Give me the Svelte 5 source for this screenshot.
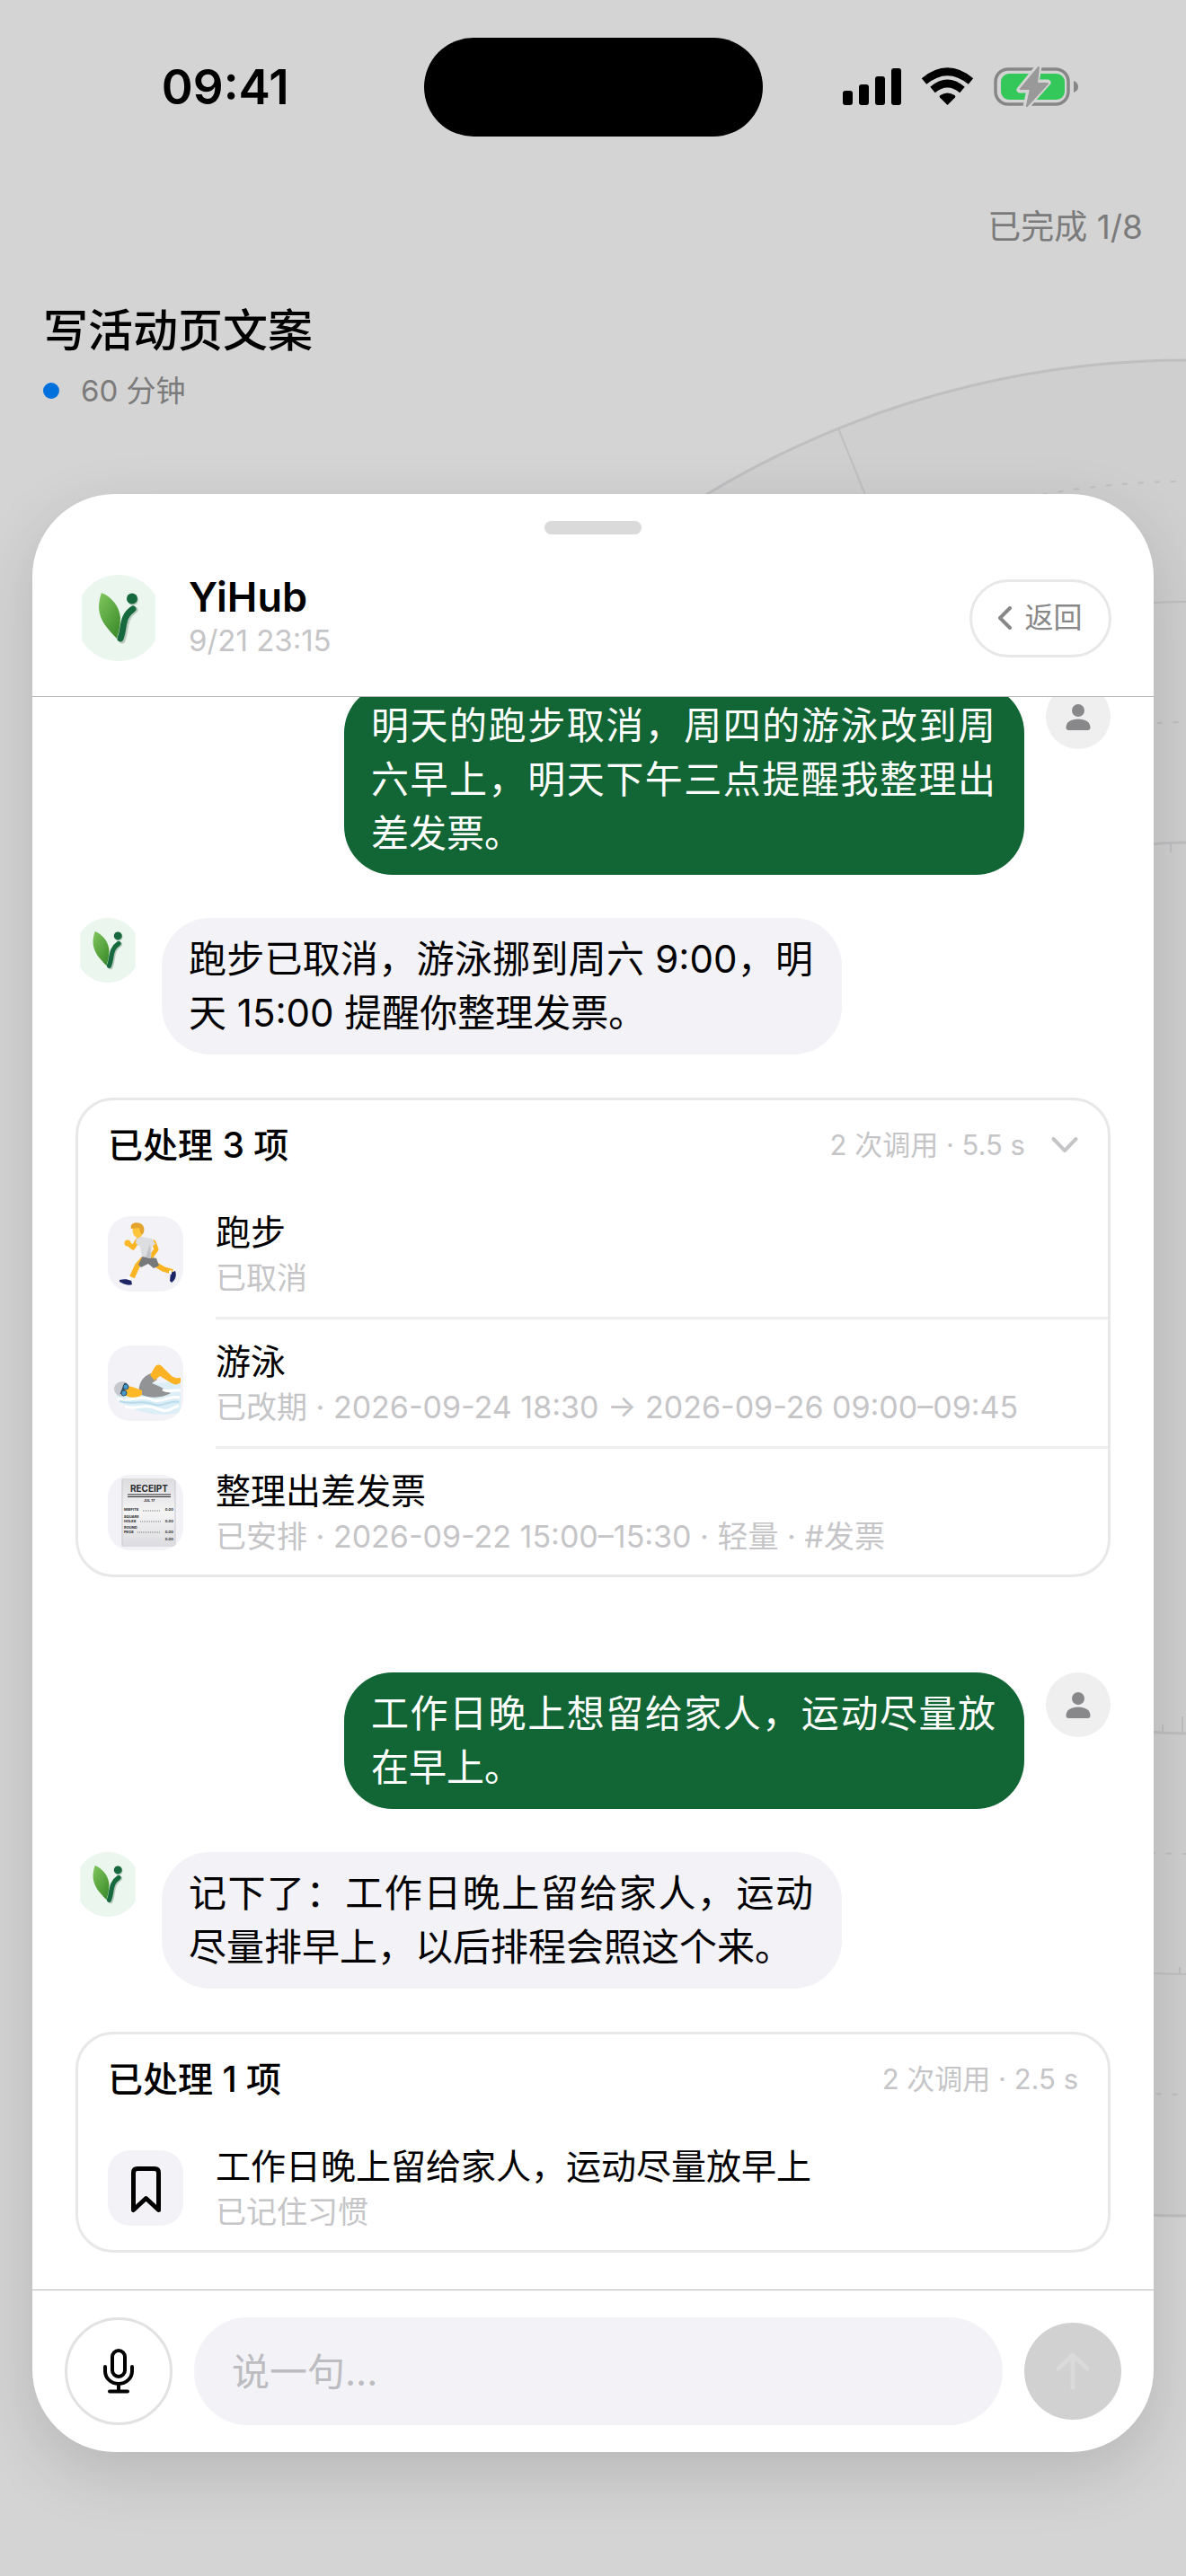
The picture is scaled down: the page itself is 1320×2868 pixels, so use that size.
<script>
  const threads = [
    {
      ask: '明天的跑步取消，周四的游泳改到周六早上，明天下午三点提醒我整理出差发票。',
      reply: '跑步已取消，游泳挪到周六 9:00，明天 15:00 提醒你整理发票。',
      title: '已处理 3 项',
      meta: '2 次调用 · 5.5 s',
      foldable: true,
      items: [
        { icon: 'run', name: '跑步', note: '已取消' },
        { icon: 'swim', name: '游泳', note: '已改期 · 2026-09-24 18:30 → 2026-09-26 09:00–09:45' },
        { icon: 'receipt', name: '整理出差发票', note: '已安排 · 2026-09-22 15:00–15:30 · 轻量 · #发票' }
      ]
    },
    {
      ask: '工作日晚上想留给家人，运动尽量放在早上。',
      reply: '记下了：工作日晚上留给家人，运动尽量排早上，以后排程会照这个来。',
      title: '已处理 1 项',
      meta: '2 次调用 · 2.5 s',
      foldable: false,
      items: [{ icon: 'bookmark', name: '工作日晚上留给家人，运动尽量放早上', note: '已记住习惯' }]
    }
  ];

  let draft = $state('');
</script>

{#snippet logo()}
  <svg class="logo" viewBox="0 0 96 96" aria-hidden="true">
    <defs>
      <linearGradient id="leaf" x1="0" y1="0" x2="0.7" y2="1">
        <stop offset="0" stop-color="#80c65c" />
        <stop offset="1" stop-color="#3f8f2e" />
      </linearGradient>
    </defs>
    <path d="M7 23A48 48 0 0 1 89 23V73A48 48 0 0 1 7 73Z" fill="#ebf6ee" />
    <path d="M29 20C39 24 49 34 50 48C50 57 48 64 46 71C36 60 27 52 26 37C26 31 27 25 29 20Z" fill="url(#leaf)" />
    <path d="M66 39C53 48 57 60 52 73" fill="none" stroke="#b9c9be" stroke-width="7" stroke-linecap="round" />
    <circle cx="64" cy="28" r="6" fill="#b9c9be" />
    <path d="M64 38C51 47 55 58 50 71" fill="none" stroke="#15693c" stroke-width="7" stroke-linecap="round" />
    <circle cx="63" cy="26.500" r="6" fill="#15693c" />
  </svg>
{/snippet}

{#snippet glyph(kind)}
  {#if kind === 'run'}
    <svg viewBox="0 0 84 84" aria-hidden="true">
      <path d="M40 47L33 55L27 68" fill="none" stroke="#fbb422" stroke-width="6" stroke-linejoin="round" />
      <path d="M50 52L62 59L72 62" fill="none" stroke="#fbb422" stroke-width="6" stroke-linejoin="round" />
      <path d="M13 71C18 70 21 70 26 71L27 76C22 78 17 75 13 73Z" fill="#1d2566" />
      <path d="M70 63L75 61C77 66 75 71 71 74L69 72Z" fill="#1d2566" />
      <path d="M22 67l5 2l-1 3l-5-2zM68 61l3-1v5l-3-1z" fill="#fff" />
      <path d="M39 44L54 47L57 55L51 58L45 53L37 57L34 54Z" fill="#77787a" />
      <path d="M34 26L28 35L22 30" fill="none" stroke="#fbb422" stroke-width="5" stroke-linejoin="round" stroke-linecap="round" />
      <circle cx="22" cy="30" r="3.500" fill="#fcb827" />
      <path d="M51 29L54 37L49 44" fill="none" stroke="#fbb422" stroke-width="5" stroke-linejoin="round" stroke-linecap="round" />
      <path d="M32 25L37 23L49 25L53 31L49 34L48 47L38 45L36 34L31 30Z" fill="#dcdddf" />
      <path d="M47 31L48 47L42 46Z" fill="#c2c3c6" />
      <path d="M28 13C29 9 39 9 39 16C39 22 35 26 31 23C28 21 27 17 28 13Z" fill="#fec53a" />
      <path d="M26 14C24 8 31 6 36 8C41 10 42 17 38 21L36 17L35 13Z" fill="#e3a32c" />
    </svg>
  {:else if kind === 'swim'}
    <svg viewBox="0 0 84 84" aria-hidden="true">
      <path d="M9 55C20 47 37 54 51 42L81 40V74C59 81 22 75 9 55Z" fill="#dceef6" />
      <path d="M35 54C33 43 39 34 48 31L55 38L49 42C57 45 65 49 70 53C60 59 46 59 35 54Z" fill="#929395" />
      <path d="M47 33L53 23C55 21 58 21 60 23L71 34C75 37 79 36 81 36V41C78 44 74 44 71 42L58 34L52 39Z" fill="#fbb323" />
      <path d="M13 48C20 42 27 46 38 50V55C31 60 18 59 13 48Z" fill="#fdb827" />
      <path d="M7 48C8 41 15 38 22 42C17 44 16 52 18 57C11 57 7 53 7 48Z" fill="#c6c8cd" />
      <path d="M20 42L15 54" stroke="#31495d" stroke-width="3" />
      <circle cx="20" cy="46" r="3" fill="#4796cc" stroke="#28506b" />
      <circle cx="18" cy="53" r="3" fill="#4796cc" stroke="#28506b" />
      <path d="M11 59C25 63 37 55 48 60S68 55 80 58M19 68C32 72 40 64 54 70S69 70 79 67M61 49C70 54 73 48 81 50" fill="none" stroke="#fff" stroke-width="3" />
      <path d="M13 62C27 67 37 60 49 65S69 60 79 63" fill="none" stroke="#b8dceb" stroke-width="2" />
    </svg>
  {:else if kind === 'receipt'}
    <svg viewBox="0 0 84 84" aria-hidden="true">
      <defs>
        <linearGradient id="paper" x1="0" y1="0" x2="0" y2="1">
          <stop offset="0" stop-color="#dcdcdf" />
          <stop offset="0.5" stop-color="#f4f4f5" />
          <stop offset="1" stop-color="#dcdce0" />
        </linearGradient>
      </defs>
      <rect x="16" y="4" width="59" height="76" fill="url(#paper)" />
      <path d="M16 5V79M75 5V79" stroke="#c9c9ce" />
      <path d="M22 22H70M22 24.500H70" stroke="#29292b" stroke-width="1" />
      <g fill="#29292b" font-weight="700">
        <text x="46" y="19" text-anchor="middle" font-size="10">RECEIPT</text>
        <g font-size="4">
          <text x="46" y="30" text-anchor="middle">JUL 17</text>
          <text x="18" y="40">MISFITS</text>
          <text x="18" y="48">SQUARE</text>
          <text x="18" y="53">HOLES</text>
          <text x="18" y="60">ROUND</text>
          <text x="18" y="65">PEGS</text>
          <g text-anchor="end">
            <text x="73" y="40">0.00</text>
            <text x="73" y="53">0.00</text>
            <text x="73" y="65">0.00</text>
            <text x="73" y="73">0.00</text>
          </g>
        </g>
      </g>
      <path d="M39 40H59M36 52H59M33 64H59" stroke="#77777a" stroke-width="1" stroke-dasharray="1 1" />
    </svg>
  {:else}
    <svg viewBox="0 0 84 84" aria-hidden="true">
      <path d="M28.500 66.500V25Q28.500 20.500 33 20.500H52Q56.500 20.500 56.500 25V66.500L42.500 53.500Z" fill="none" stroke="#000" stroke-width="5" stroke-linejoin="round" />
    </svg>
  {/if}
{/snippet}

<div class="page">
  <svg class="dial" width="1320" height="2868" viewBox="0 0 1320 2868" aria-hidden="true">
    <circle cx="1322" cy="1434" r="1033" fill="#000" fill-opacity="0.024" />
    <g fill="none" stroke="#bfbfc2">
      <circle cx="1322" cy="1434" r="1033" stroke-width="3" />
      <circle cx="1322" cy="1434" r="764" stroke-width="2" />
      <circle cx="1322" cy="1434" r="496" stroke-width="3" />
      <g stroke-width="2" stroke-dasharray="6 12">
        <circle cx="1322" cy="1434" r="898" />
        <circle cx="1322" cy="1434" r="630" />
      </g>
      <path d="M933 477L1063 797M1303 940V949M1294 1920V1929M1316 1911V1929M1313 2190V2197" stroke-width="2" />
    </g>
  </svg>

  <header class="status">
    <time>09:41</time>
    <span class="island"></span>
    <svg class="signals" width="264" height="48" viewBox="0 0 264 48" role="img" aria-label="信号、无线网络、正在充电">
      <rect x="1" y="28" width="11" height="16" rx="3" />
      <rect x="19" y="21" width="11" height="23" rx="3" />
      <rect x="37" y="12" width="11" height="32" rx="3" />
      <rect x="55" y="3" width="11" height="41" rx="3" />
      <path d="M117.500 44L109 35.500Q108 34 109.500 33Q117.500 28 125.500 33Q127 34 126 35.500Z" />
      <g fill="none" stroke="#000">
        <path d="M101 27Q117.500 13 134 27" stroke-width="8.500" />
        <path d="M91.500 17.500Q117.500 -4 143.500 17.500" stroke-width="8.500" />
      </g>
      <rect x="171" y="4" width="81" height="39" rx="14" fill="none" stroke="#868686" stroke-width="3.500" />
      <path d="M258 17Q263 19 263 23.500T258 30Z" fill="#868686" />
      <rect x="177" y="9" width="71" height="29" rx="9" fill="#34c759" />
      <path d="M219 1L198 27H209L205 46L229 19H216Z" fill="#999" stroke="#d4d4d4" stroke-width="7" stroke-linejoin="round" paint-order="stroke" />
      <path d="M219 2L199 26H210L206 45L229 20H217Z" fill="#999" stroke="#999" stroke-width="2" stroke-linejoin="round" />
    </svg>
  </header>

  <section class="task">
    <p class="progress">已完成 1/8</p>
    <h1>写活动页文案</h1>
    <p class="duration"><span class="dot"></span>60 分钟</p>
  </section>

  <main class="sheet">
    <div class="handle"></div>
    <header class="head">
      {@render logo()}
      <div class="who">
        <h2>YiHub</h2>
        <time>9/21 23:15</time>
      </div>
      <button class="back" type="button">
        <svg width="15" height="26" viewBox="0 0 15 26" aria-hidden="true">
          <path d="M13 2L2 13L13 24" fill="none" stroke="currentColor" stroke-width="4" stroke-linecap="round" stroke-linejoin="round" />
        </svg>
        返回
      </button>
    </header>

    <div class="log">
      <div class="scrolled">
        {#each threads as t}
          <section class="thread">
            <div class="msg mine">
              <p class="bubble">{t.ask}</p>
              <span class="avatar">
                <svg viewBox="0 0 72 72" aria-hidden="true">
                  <circle cx="36" cy="29" r="7" />
                  <path d="M22.500 48C22.500 42 28 38.500 36 38.500S49.500 42 49.500 48Q49.500 51 46.500 51H25.500Q22.500 51 22.500 48Z" />
                </svg>
              </span>
            </div>
            <div class="msg">
              <span class="avatar bot">{@render logo()}</span>
              <p class="bubble">{t.reply}</p>
            </div>
            <article class="card">
              <header>
                <h3>{t.title}</h3>
                <span class="meta">{t.meta}</span>
                {#if t.foldable}
                  <button class="fold" type="button" aria-label="收起">
                    <svg width="30" height="20" viewBox="0 0 30 20" aria-hidden="true">
                      <path d="M2.500 3L15 16L27.500 3" fill="none" stroke="currentColor" stroke-width="4" stroke-linecap="round" stroke-linejoin="round" />
                    </svg>
                  </button>
                {/if}
              </header>
              <ul>
                {#each t.items as item}
                  <li>
                    <span class="tile">{@render glyph(item.icon)}</span>
                    <div class="info">
                      <strong>{item.name}</strong>
                      <small>{item.note}</small>
                    </div>
                  </li>
                {/each}
              </ul>
            </article>
          </section>
        {/each}
      </div>
    </div>

    <form class="composer" onsubmit={(e) => e.preventDefault()}>
      <button class="mic" type="button" aria-label="语音输入">
        <svg width="36" height="50" viewBox="0 0 36 50" fill="none" stroke="currentColor" stroke-width="4" stroke-linecap="round" aria-hidden="true">
          <rect x="11" y="2" width="14" height="29" rx="7" />
          <path d="M3 20V25A15 14 0 0 0 33 25V20M18 39V47M8 47.500H28" />
        </svg>
      </button>
      <input type="text" aria-label="消息" placeholder="说一句..." bind:value={draft} />
      <button class="send" type="submit" aria-label="发送">
        <svg width="38" height="42" viewBox="0 0 38 42" fill="none" stroke="currentColor" stroke-width="5" stroke-linecap="round" stroke-linejoin="round" aria-hidden="true">
          <path d="M19 39V4M3 18L19 3L35 18" />
        </svg>
      </button>
    </form>
  </main>
</div>

<style>
  :global(body) {
    margin: 0;
    background: #d4d4d4;
  }
  .page {
    position: relative;
    overflow: hidden;
    box-sizing: border-box;
    padding-bottom: 138px;
    background: #d4d4d4;
    color: #000;
    font-family: Inter, 'Noto Sans CJK SC', sans-serif;
  }
  h1, h2, h3, p, ul {
    margin: 0;
    padding: 0;
  }
  button {
    display: flex;
    align-items: center;
    justify-content: center;
    padding: 0;
    border: 0;
    background: none;
    color: inherit;
    font: inherit;
  }
  svg {
    display: block;
    flex: none;
  }
  .dial {
    position: absolute;
    top: 0;
    right: 0;
  }
  .status {
    position: relative;
    display: grid;
    grid-template-columns: 1fr 377px 1fr;
    align-items: center;
    padding-top: 42px;
  }
  .status time {
    justify-self: center;
    padding-left: 30px;
    font-size: 53px;
    line-height: 60px;
    font-weight: 600;
  }
  .island {
    height: 110px;
    border-radius: 55px;
    background: #000;
  }
  .signals {
    margin-left: 88px;
  }
  .task {
    position: relative;
    display: flex;
    flex-direction: column;
    padding: 74px 48px 0;
  }
  .progress {
    align-self: flex-end;
    color: #7b7b7b;
    font-size: 37px;
    line-height: 54px;
  }
  h1 {
    padding-top: 52px;
    font-size: 50px;
    line-height: 72px;
    font-weight: 500;
  }
  .duration {
    display: flex;
    align-items: center;
    gap: 24px;
    padding-top: 7px;
    color: #7b7b7b;
    font-size: 33px;
    line-height: 48px;
  }
  .dot {
    width: 18px;
    height: 18px;
    border-radius: 50%;
    background: #0070dd;
  }
  .sheet {
    position: relative;
    margin: 91px 36px 0;
    padding-top: 30px;
    border-radius: 92px;
    background: #fff;
    box-shadow: 0 24px 72px rgba(0, 0, 0, 0.14);
  }
  .handle {
    width: 108px;
    height: 15px;
    margin: 0 auto;
    border-radius: 8px;
    background: #dadada;
  }
  .head {
    display: flex;
    align-items: center;
    gap: 30px;
    padding: 45px 47px 39px 48px;
    border-bottom: 1px solid #b9b9bb;
  }
  .logo {
    width: 96px;
    height: 96px;
  }
  .who {
    flex: 1;
  }
  h2 {
    font-size: 45px;
    line-height: 50px;
    font-weight: 600;
  }
  .who time {
    display: block;
    color: #c5c5c7;
    font-size: 33px;
    line-height: 46px;
  }
  .back {
    gap: 14px;
    box-sizing: border-box;
    width: 158px;
    height: 87px;
    border: 3px solid #e8e8e8;
    border-radius: 44px;
    color: #888;
    font-size: 32px;
    line-height: 48px;
  }
  .log {
    overflow: hidden;
    padding: 0 48px 41px;
    border-bottom: 1px solid #b9b9bb;
  }
  /* The log is scrolled so that its first bubble sits partly under the header. */
  .scrolled {
    display: flex;
    flex-direction: column;
    gap: 106px;
    margin-top: -14px;
  }
  .thread {
    display: flex;
    flex-direction: column;
    gap: 48px;
  }
  .msg {
    display: flex;
    align-items: flex-start;
    gap: 24px;
  }
  .mine {
    justify-content: flex-end;
  }
  .bubble {
    box-sizing: border-box;
    max-width: 757px;
    padding: 16px 32px 16px 30px;
    border-radius: 54px;
    background: #f2f2f7;
    font-size: 42px;
    line-height: 60px;
    text-align: justify;
  }
  .mine .bubble {
    background: #126534;
    color: #fff;
  }
  .avatar {
    flex: none;
    width: 72px;
    height: 72px;
    border-radius: 50%;
    background: #efefef;
    fill: #88888b;
  }
  .bot {
    background: none;
  }
  .bot .logo {
    width: 72px;
    height: 72px;
  }
  .card {
    border: 3px solid #e8e8e8;
    border-radius: 42px;
  }
  .card header {
    display: flex;
    align-items: center;
    height: 100px;
    padding: 0 33px;
  }
  h3 {
    flex: 1;
    font-size: 39px;
    line-height: 54px;
    font-weight: 500;
  }
  .meta {
    color: #c5c5c7;
    font-size: 31px;
    line-height: 42px;
  }
  .fold {
    margin-left: 29px;
    color: #c5c5c7;
  }
  ul {
    list-style: none;
  }
  li {
    display: flex;
    gap: 36px;
    padding-left: 33px;
  }
  .tile {
    flex: none;
    width: 84px;
    height: 84px;
    margin-top: 29px;
    overflow: hidden;
    border-radius: 25px;
    background: #f2f2f7;
  }
  .info {
    display: flex;
    flex: 1;
    flex-direction: column;
    padding: 20px 0 20px;
    border-bottom: 3px solid #ededed;
  }
  li:last-child .info {
    padding-bottom: 19px;
    border-bottom: 0;
  }
  strong {
    font-size: 39px;
    line-height: 54px;
    font-weight: 400;
  }
  small {
    color: #c5c5c7;
    font-size: 34px;
    line-height: 47px;
  }
  .composer {
    display: flex;
    align-items: center;
    gap: 24px;
    padding: 30px 36px;
  }
  .mic {
    flex: none;
    box-sizing: border-box;
    width: 120px;
    height: 120px;
    border: 3px solid #e2e2e2;
    border-radius: 50%;
  }
  input {
    flex: 1;
    box-sizing: border-box;
    min-width: 0;
    height: 120px;
    padding: 0 42px;
    border: 0;
    border-radius: 60px;
    background: #f2f2f7;
    color: #000;
    font: inherit;
    font-size: 42px;
  }
  input::placeholder {
    color: #bcbcc1;
    opacity: 1;
  }
  .send {
    flex: none;
    width: 108px;
    height: 108px;
    border-radius: 50%;
    background: #d1d1d1;
    color: #dadada;
  }
</style>
